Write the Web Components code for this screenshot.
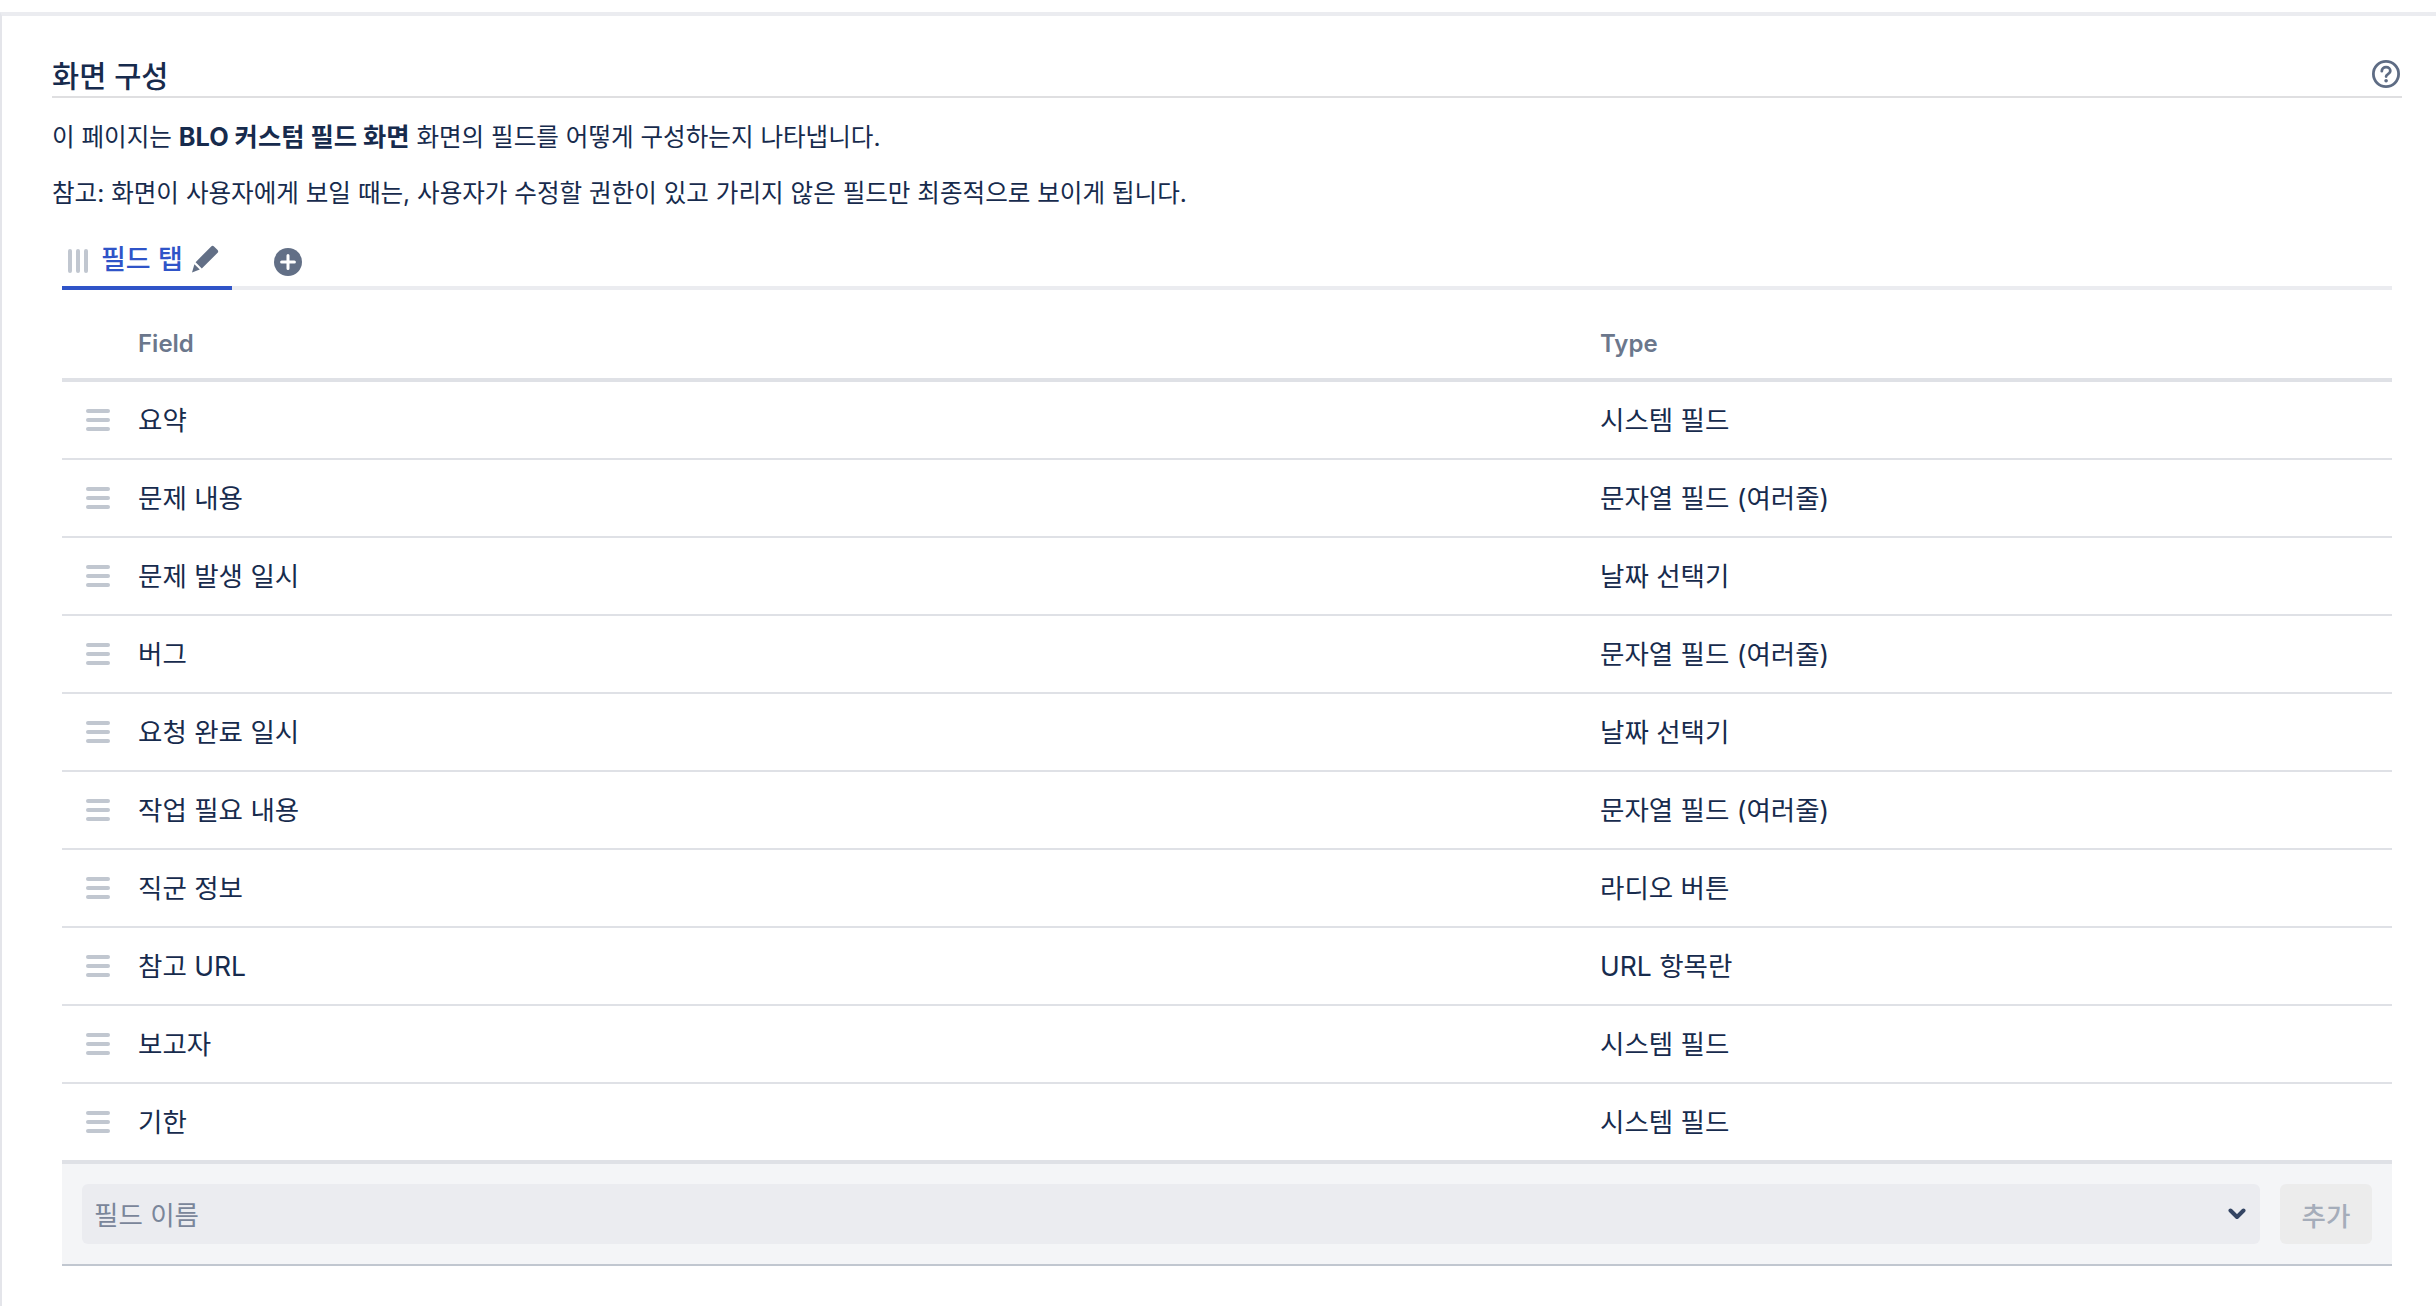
<!DOCTYPE html>
<html lang="ko"><head><meta charset="utf-8"><title>화면 구성</title>
<style>
html,body{margin:0;padding:0;background:#fff;}
body{padding-top:12px;font-family:Inter,"Noto Sans CJK KR",sans-serif;color:#172b4d;font-size:26px;}
screen-note b{font-size:25.3px;font-weight:700}
</style></head><body>
<screen-config>
  <screen-head title-text="화면 구성"></screen-head>
  <screen-note><span>이 페이지는 <b>BLO 커스텀 필드 화면</b> 화면의 필드를 어떻게 구성하는지 나타냅니다.</span></screen-note>
  <screen-note><span>참고: 화면이 사용자에게 보일 때는, 사용자가 수정할 권한이 있고 가리지 않은 필드만 최종적으로 보이게 됩니다.</span></screen-note>
  <tab-bar label="필드 탭"></tab-bar>
  <field-table>
    <field-row name="요약" type="시스템 필드"></field-row>
    <field-row name="문제 내용" type="문자열 필드 (여러줄)"></field-row>
    <field-row name="문제 발생 일시" type="날짜 선택기"></field-row>
    <field-row name="버그" type="문자열 필드 (여러줄)"></field-row>
    <field-row name="요청 완료 일시" type="날짜 선택기"></field-row>
    <field-row name="작업 필요 내용" type="문자열 필드 (여러줄)"></field-row>
    <field-row name="직군 정보" type="라디오 버튼"></field-row>
    <field-row name="참고 URL" type="URL 항목란"></field-row>
    <field-row name="보고자" type="시스템 필드"></field-row>
    <field-row name="기한" type="시스템 필드" last></field-row>
  </field-table>
  <add-bar></add-bar>
</screen-config>
<script>
function def(name, html){
  customElements.define(name, class extends HTMLElement{
    connectedCallback(){
      if(this.shadowRoot) return;
      const r=this.attachShadow({mode:'open'});
      r.innerHTML=typeof html==='function'?html(this):html;
    }
  });
}
def('screen-config',`<style>:host{display:block;border-top:4px solid #ebecf0;border-left:2px solid #e4e5ea;height:1294px;box-sizing:border-box;padding:0 34px 0 50px}</style><slot></slot>`);
def('screen-head',h=>`<style>
:host{display:flex;align-items:center;justify-content:space-between;height:82px;box-sizing:border-box;padding-top:39px;border-bottom:2px solid #dfdfe1;}
h2{margin:0;font-size:29.5px;line-height:40px;font-weight:500;color:#172b4d;}
svg{display:block;margin-right:2px;margin-top:-4px}
</style><h2>${h.getAttribute('title-text')}</h2>
<svg width="28" height="28" viewBox="0 0 28 28" fill="none"><circle cx="14" cy="14" r="12.6" stroke="#5e6c84" stroke-width="2.8"/><path d="M9.8 11.2c0-2.4 1.9-4 4.3-4s4.2 1.6 4.2 3.8c0 3.3-4.2 3-4.2 5.6" stroke="#5e6c84" stroke-width="2.8" stroke-linecap="round"/><circle cx="14.1" cy="20.8" r="1.8" fill="#5e6c84"/></svg>`);
def('screen-note',`<style>:host{display:block;font-size:24.57px;line-height:36px;height:36px;margin-top:20px;padding-top:1px;margin-bottom:-1px;color:#172b4d;white-space:nowrap}</style><slot></slot>`);
def('tab-bar',h=>`<style>
:host{display:flex;height:58px;box-sizing:border-box;margin:22px 10px 0 10px;border-bottom:4px solid #ebecf0;align-items:flex-start}
.tab{display:flex;align-items:center;width:170px;height:58px;box-sizing:border-box;border-bottom:4px solid #2f54c8;padding:0 0 0 6px;gap:0}
.lab{font-size:27px;font-weight:500;color:#2f54c8;line-height:36px;margin:2px 8px 0 13px}
.add{margin-left:42px;margin-top:16px;display:block}
.h{display:block;margin-top:4px}
.p{margin-top:0}
</style>
<div class="tab">
<svg class="h" width="20" height="24" viewBox="0 0 20 24"><rect x="0" width="4" height="24" rx="2" fill="#c1c7d0"/><rect x="8" width="4" height="24" rx="2" fill="#c1c7d0"/><rect x="16" width="4" height="24" rx="2" fill="#c1c7d0"/></svg>
<span class="lab">${h.getAttribute('label')}</span>
<svg class="p" width="28" height="28" viewBox="0 0 28 28"><path d="M20.2 1.4c.8-.8 2-.8 2.8 0l3.6 3.6c.8.8.8 2 0 2.8L10.8 23.4 4.6 17.2Z" fill="#626f86"/><path d="M3.4 19.2 8.8 24.6 1 27.4Z" fill="#626f86"/></svg>
</div>
<svg class="add" width="28" height="28" viewBox="0 0 28 28"><circle cx="14" cy="14" r="14" fill="#626f86"/><path d="M14 7.6v12.8M7.6 14h12.8" stroke="#fff" stroke-width="3" stroke-linecap="round"/></svg>`);
def('field-table',`<style>
:host{display:block;margin:0 10px}
.head{display:grid;grid-template-columns:76px 1462px 1fr;height:92px;box-sizing:border-box;border-bottom:4px solid #dfe1e6;align-items:center;font-size:24px;font-weight:600;color:#6b778c;padding-top:19px}
</style>
<div class="head"><span></span><span>Field</span><span>Type</span></div>
<slot></slot>`);
def('field-row',h=>`<style>
:host{display:grid;grid-template-columns:76px 1462px 1fr;height:${h.hasAttribute('last')?76:78}px;box-sizing:border-box;align-items:center;font-size:26.5px;color:#172b4d;${h.hasAttribute('last')?'':'border-bottom:2px solid #dfe1e6;'}}
.g{display:flex;flex-direction:column;gap:4.6px;margin-left:24px;width:24px}
.g i{display:block;height:4px;border-radius:2px;background:#c1c7d0}
span{padding-bottom:3px}
</style>
<div class="g"><i></i><i></i><i></i></div><span>${h.getAttribute('name')}</span><span>${h.getAttribute('type')}</span>`);
def('add-bar',`<style>
:host{display:flex;margin:0 10px;height:106px;box-sizing:border-box;border-top:4px solid;border-image:linear-gradient(#dfe1e6 50%,#c1c7d0 50%) 4;border-bottom:2px solid #c1c7d0;background:#f4f5f7;padding:20px;gap:20px}
.sel{flex:1;display:flex;align-items:center;justify-content:space-between;background:#ebecf0;border-radius:6px;padding:0 12px;color:#7a869a;font-size:26.5px}
.sel span{padding-bottom:2px}
.btn{width:92px;display:flex;align-items:center;justify-content:center;background:#ececec;border-radius:6px;color:#a5adba;font-size:26.5px;font-weight:500}
svg{display:block;margin-right:2px}
</style>
<div class="sel"><span>필드 이름</span><svg width="18" height="12" viewBox="0 0 18 12"><path d="M2.5 2.5 9 9l6.5-6.5" fill="none" stroke="#344563" stroke-width="4" stroke-linecap="round" stroke-linejoin="round"/></svg></div>
<div class="btn">추가</div>`);
</script>
</body></html>
